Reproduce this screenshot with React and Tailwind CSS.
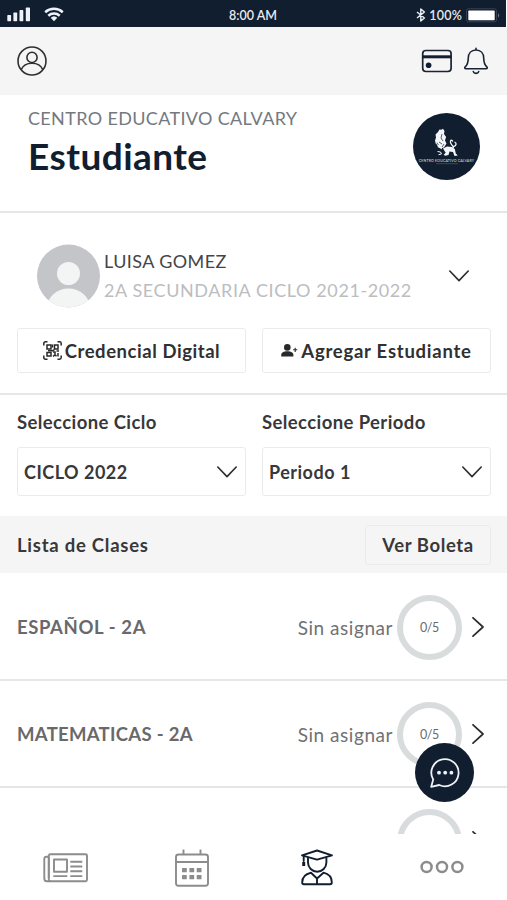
import { clsx } from "clsx"

const classes = [
  { id: 1, name: "ESPAÑOL - 2A", status: "Sin asignar", progress: "0/5", tracking: "tracking-[0.6px]" },
  { id: 2, name: "MATEMATICAS - 2A", status: "Sin asignar", progress: "0/5", tracking: "tracking-[0.3px]" },
  { id: 3 },
]

const ChevronDown = ({ className }) => (
  <svg viewBox="0 0 20 12" fill="none" stroke="#2c2c2e" strokeWidth="1.6" strokeLinecap="round" strokeLinejoin="round" className={clsx("w-5 h-3 shrink-0", className)}>
    <path d="M0.8 1 10 10.6 19.2 1" />
  </svg>
)

const ChevronRight = () => (
  <svg viewBox="0 0 12 20" fill="none" stroke="#2c2c2e" strokeWidth="1.7" strokeLinecap="round" strokeLinejoin="round" className="w-3 h-5 shrink-0">
    <path d="M1 0.8 11 10 1 19.2" />
  </svg>
)

const StatusBar = () => (
  <div className="relative flex items-center h-[27px] w-[506px] bg-[#111e30] text-white">
    <svg viewBox="0 0 60 27" fill="#eef3fa" className="w-[60px] h-[27px] ml-[5px]">
      <rect x="2.3" y="15" width="3.8" height="6.2" rx="0.7" />
      <rect x="8.4" y="12.5" width="3.8" height="8.7" rx="0.7" />
      <rect x="14.5" y="10" width="3.8" height="11.2" rx="0.7" />
      <rect x="20.8" y="7.5" width="4.2" height="13.7" rx="0.7" />
      <g fill="none" stroke="#eef3fa" strokeWidth="2.5">
        <path d="M40.2 12.2a13.2 13.2 0 0 1 17.6 0" />
        <path d="M43.3 15.7a8.6 8.6 0 0 1 11.4 0" />
      </g>
      <path d="M49 21.2l-3.3-3.4a4.9 4.9 0 0 1 6.6 0z" />
    </svg>
    <span className="absolute inset-x-0 top-2 text-center text-[12.5px] leading-4 font-semibold text-[#e6ebf2]">8:00 AM</span>
    <div className="ml-auto flex items-center pt-[3px]">
      <svg viewBox="0 0 10 14" fill="none" stroke="#e6ebf2" strokeWidth="1.5" strokeLinejoin="round" className="w-[10px] h-[14px]">
        <path d="M1 4 8.4 10 4.8 13V1l3.6 3L1 10" />
      </svg>
      <span className="ml-[3px] pt-px text-[12.5px] leading-4 font-semibold tracking-[0.2px] text-[#e6ebf2]">100%</span>
      <svg viewBox="0 0 34 15" className="w-[34px] h-[15px] ml-[4px]">
        <rect x="0.5" y="0.8" width="30" height="13" rx="2" fill="none" stroke="#3b4657" strokeWidth="0.9" />
        <rect x="2.3" y="2.5" width="26.4" height="9.8" rx="0.8" fill="#fff" />
        <path d="M32 5.3a2.4 2.4 0 0 1 0 4.2z" fill="#667080" />
      </svg>
      <span className="w-[6px]" />
    </div>
  </div>
)

const TopBar = () => (
  <div className="flex items-center h-[68px] bg-[#f5f5f5] pl-[17px] pr-[18px]">
    <svg viewBox="0 0 30 30" fill="none" stroke="#303033" strokeWidth="1.6" className="w-[30px] h-[30px]">
      <circle cx="15" cy="15" r="14" />
      <circle cx="15" cy="11.4" r="5.1" />
      <path d="M4.2 23.6c1.8-4.2 6-6.4 10.8-6.4s9 2.2 10.8 6.4" />
    </svg>
    <svg viewBox="0 0 32 24" fill="none" stroke="#1a2334" strokeWidth="1.7" className="w-8 h-6 ml-auto">
      <rect x="1.7" y="1.5" width="28.4" height="21" rx="3.2" />
      <path d="M1.7 7.8h28.4" strokeWidth="3" stroke="#111d30" />
      <circle cx="7.6" cy="16.2" r="2.8" fill="#111d30" stroke="none" />
    </svg>
    <svg viewBox="0 0 26 28" fill="none" stroke="#1a2334" strokeWidth="1.6" strokeLinecap="round" strokeLinejoin="round" className="w-[26px] h-[28px] ml-[10px]">
      <path d="M13 1.2v1.7M13 3c-4.8 0-7.6 3.4-7.7 8-.1 5.2-.9 6.9-3.1 8.9-.9.9-.4 1.8.7 1.8h20.2c1.1 0 1.6-.9.7-1.8-2.2-2-3-3.7-3.1-8.9C20.6 6.4 17.8 3 13 3z" />
      <path d="M10.3 24.6c.6 2.3 4.8 2.3 5.4 0" />
    </svg>
  </div>
)

const SchoolLogo = () => (
  <div className="relative w-[67px] h-[67px] rounded-full bg-[#111e30] overflow-hidden">
    <svg viewBox="0 0 67 67" fill="#f3f6f9" className="w-full h-full">
      <path d="M25 19l1.5-2.5 2 .3 1.5-1 1.5 2.2-.5 3 2 3-1 3.500 1.500 3-2.500 4-3.500 1-3-1.500 1-2.500-1.800-2.500-.7 2.500-1-4 1-3-.5-3z" />
      <path d="M30 35.500l4-2 5 .5 2.800 2 1 4.500 2 2-3.300.5-1.500-4-3.500-.5-1 3.500-3.300.8-1.500-1 2-2z" />
      <path d="M40.500 35c-.5-3-4-4-3-7 .6-1.300 2.400-.8 2 .6M40.500 33.500c3-.5 3.500-3.500 1-4.500" fill="none" stroke="#f3f6f9" strokeWidth="1.300" />
      <path d="M24.500 38.500l3 .5 1 2-3 .7M23 29l2 4 4 3M28 25l5-1" fill="none" stroke="#f3f6f9" strokeWidth="1" />
      <path d="M29 21l-1 4 2 3M31 31l-2 3M26 29l3 2" fill="none" stroke="#111e30" strokeWidth="0.700" />
      <path d="M23 50.700h22" stroke="#56657a" strokeWidth="0.600" />
    </svg>
    <span className="absolute inset-x-0 top-[45px] text-center whitespace-nowrap text-[3.6px] leading-[5px] tracking-[0.12px] font-semibold text-[#c0cad5]">CENTRO EDUCATIVO CALVARY</span>
  </div>
)

const SchoolHeader = () => (
  <div className="flex justify-between h-[118px] border-b-2 border-[#e6e6e6] pl-7 pr-[27px]">
    <div className="pt-[10px]">
      <p className="text-[18px] leading-[26px] tracking-[0.35px] text-[#74797f]">CENTRO EDUCATIVO CALVARY</p>
      <h1 className="mt-[3px] text-[37px] leading-[44px] tracking-[0.45px] font-bold text-[#111e30]">Estudiante</h1>
    </div>
    <div className="pt-[18px]">
      <SchoolLogo />
    </div>
  </div>
)

const QrIcon = () => (
  <svg viewBox="0 0 19 19" fill="none" stroke="#29292b" strokeWidth="1.5" className="w-[19px] h-[19px] shrink-0">
    <path d="M.8 4.500V2.500Q.8.800 2.500.800h2M14.500.800h2q1.700 0 1.700 1.700v2M18.200 14.500v2q0 1.700-1.700 1.700h-2M4.500 18.200h-2Q.8 18.200.8 16.500v-2" />
    <path d="M4 4h4v4H4zM11.500 4h3.500v4h-3.500zM4 11.500h4V15H4z" />
    <path d="M9.500 3.500v3M5 9.700h4.500l2-1M10 11h2v2M13.500 10h2.500M10 15.300l2-1.500 1.500 1.500M15 12v3.500" />
  </svg>
)

const AddUserIcon = () => (
  <svg viewBox="0 0 17 13" fill="#29292b" className="w-[17px] h-[13px] shrink-0">
    <circle cx="6.3" cy="3.4" r="3.3" />
    <path d="M.2 12.5V11c0-2.6 2.6-3.8 6.1-3.8s6.1 1.2 6.1 3.8v1.5z" />
    <path d="M14.2 3.7v4.200M12.100 5.800h4.200" stroke="#29292b" strokeWidth="1.1" />
  </svg>
)

const StudentCard = () => (
  <div className="h-[182px] border-b-2 border-[#e6e6e6] pl-[17px] pr-4 pt-[31px]">
    <div className="flex pl-5">
      <svg viewBox="0 0 63 64" className="w-[63px] h-[64px]">
        <defs>
          <clipPath id="avatar">
            <circle cx="31.5" cy="32" r="31.5" />
          </clipPath>
        </defs>
        <g clipPath="url(#avatar)">
          <rect width="63" height="64" fill="#c3c5c8" />
          <circle cx="31.5" cy="29.5" r="11.5" fill="#f3f4f4" />
          <ellipse cx="31.5" cy="64" rx="21.5" ry="19.5" fill="#f3f4f4" />
        </g>
      </svg>
      <div className="pl-1 pt-[3px] whitespace-nowrap">
        <p className="text-[18px] leading-[29px] tracking-[0.4px] text-[#454547]">LUISA GOMEZ</p>
        <p className="text-[18px] leading-[29px] tracking-[0.6px] text-[#bcbdbf]">2A SECUNDARIA CICLO 2021-2022</p>
      </div>
      <ChevronDown className="ml-auto mr-[22px] mt-[26px]" />
    </div>
    <div className="grid grid-cols-2 gap-4 mt-[20px] text-[18.5px] font-bold text-[#303032]">
      <button className="flex items-center justify-center h-[45px] border border-[#ebebeb] rounded-[3px] whitespace-nowrap">
        <QrIcon />
        <span className="ml-[3px] pt-[2px] tracking-[0.55px]">Credencial Digital</span>
      </button>
      <button className="flex items-center justify-center h-[45px] border border-[#ebebeb] rounded-[3px] whitespace-nowrap">
        <AddUserIcon />
        <span className="ml-[3px] pt-[2px] tracking-[0.75px]">Agregar Estudiante</span>
      </button>
    </div>
  </div>
)

const SelectField = ({ label, value }) => (
  <div>
    <p className="text-[18.5px] leading-[24px] tracking-[0.4px] font-bold">{label}</p>
    <div className="flex items-center justify-between h-[49px] mt-[13px] pl-[6px] pr-[8px] border border-[#ebebeb] rounded-[3px]">
      <span className="pt-px text-[18px] font-bold tracking-[0.5px]">{value}</span>
      <ChevronDown />
    </div>
  </div>
)

const ProgressRing = ({ label }) => (
  <div className="flex items-center justify-center w-[65px] h-[65px] shrink-0 rounded-full border-[6px] border-[#d9dcdc] pt-[2px] text-[12.5px] tracking-[-0.4px] text-[#6b6b6d]">
    {label}
  </div>
)

const ClassRow = ({ item }) => (
  <div className="flex items-center h-[107px] shrink-0 border-b-2 border-[#e6e6e6] pl-[17px] pr-[23px] pt-[2px]">
    <span className={clsx("text-[18.5px] font-bold text-[#69696b]", item.tracking)}>{item.name}</span>
    <span className="ml-auto mr-[4px] pt-px text-[19px] tracking-[0.55px] text-[#717173]">{item.status}</span>
    <ProgressRing label={item.progress} />
    <span className="ml-[10px] pb-px">
      <ChevronRight />
    </span>
  </div>
)

const BottomNav = () => (
  <nav className="relative flex h-[66px] bg-white">
    <svg viewBox="0 0 46 30" fill="none" stroke="#8c8c8c" strokeWidth="1.9" strokeLinejoin="round" className="w-[46px] h-[30px] ml-[43px] mt-[19px]">
      <rect x="5.8" y="1.3" width="38.2" height="26.9" rx="1.5" />
      <path d="M5.8 3.700H3.500Q1.300 3.700 1.300 6v19.200q0 3 2.400 3h4M5.800 4v21" />
      <rect x="11" y="6.5" width="13" height="12.3" />
      <path d="M27.300 8.700h12M27.300 13.500h12M27.300 18.300h12M27.300 23.100h12M10.300 23.100h14" />
    </svg>
    <svg viewBox="0 0 36 40" fill="none" stroke="#8c8c8c" strokeWidth="1.9" className="w-[36px] h-[40px] ml-[85px] mt-[14px]">
      <rect x="2" y="6.5" width="32" height="31.3" rx="2.5" />
      <path d="M2 14h32M9.500 1.500v5M26.500 1.500v5" />
      <g fill="#8c8c8c" stroke="none">
        <rect x="8" y="20" width="4.8" height="4.3" rx="0.5" />
        <rect x="15.4" y="20" width="4.8" height="4.3" rx="0.5" />
        <rect x="22.7" y="20" width="4.8" height="4.3" rx="0.5" />
        <rect x="8" y="27" width="4.8" height="4.3" rx="0.5" />
        <rect x="15.4" y="27" width="4.8" height="4.3" rx="0.5" />
        <rect x="22.7" y="27" width="4.8" height="4.3" rx="0.5" />
      </g>
    </svg>
    <svg viewBox="0 0 34 38" fill="none" stroke="#111e30" strokeWidth="1.9" strokeLinecap="round" strokeLinejoin="round" className="w-[34px] h-[38px] ml-[90px] mt-[15px]">
      <path d="M17 1.500 32 6.300 17 10.700 2 6.300z" />
      <path d="M8 9.300v4.200a9.200 9.200 0 0 0 18.400 0V9.300M3.700 7v5" />
      <path d="M3.700 13v4" strokeWidth="3" strokeLinecap="butt" />
      <path d="M17 29.500l-6-5.800C5 25 2.200 28.300 2.200 33.500q0 1.700 1.700 1.700H30q1.800 0 1.800-1.700c0-5.200-2.800-8.500-8.300-9.800L17 29.500v5.700" />
    </svg>
    <svg viewBox="0 0 44 14" fill="none" stroke="#8c8c8c" strokeWidth="2.5" className="w-[44px] h-[14px] ml-[86px] mt-[26px]">
      <circle cx="6.6" cy="7" r="5" />
      <circle cx="22" cy="7" r="5" />
      <circle cx="37.4" cy="7" r="5" />
    </svg>
  </nav>
)

const ChatButton = () => (
  <button className="absolute left-[415px] top-[743px] flex items-center justify-center w-[59px] h-[59px] rounded-full bg-[#111e30]">
    <svg viewBox="0 0 32 32" fill="none" stroke="#eef2f7" strokeWidth="1.8" strokeLinejoin="round" className="w-8 h-8">
      <path d="M2.200 29.800l2-7.300A13.600 13.600 0 1 1 10.200 28z" />
      <g fill="#eef2f7" stroke="none">
        <circle cx="10" cy="15.7" r="1.9" />
        <circle cx="16.2" cy="15.7" r="1.9" />
        <circle cx="22.4" cy="15.7" r="1.9" />
      </g>
    </svg>
  </button>
)

const App = () => {
  return (
    <div className="relative w-[507px] h-[900px] overflow-hidden bg-white font-['Lato',sans-serif] text-[#38383a]">
      <StatusBar />
      <TopBar />
      <SchoolHeader />
      <StudentCard />

      <div className="grid grid-cols-2 gap-4 h-[121px] pl-[17px] pr-4 pt-[15px]">
        <SelectField label="Seleccione Ciclo" value="CICLO 2022" />
        <SelectField label="Seleccione Periodo" value="Periodo 1" />
      </div>

      <div className="flex items-center justify-between h-[57px] bg-[#f5f5f5] pl-[17px] pr-4 pt-px">
        <h2 className="pt-[2px] text-[18.5px] tracking-[0.75px] font-bold">Lista de Clases</h2>
        <button className="w-[126px] h-[40px] border border-[#ebebeb] rounded-[3px] pt-[2px] text-[18.5px] tracking-[0.6px] font-bold">Ver Boleta</button>
      </div>

      <div className="flex flex-col h-[261px] pt-px overflow-hidden">
        {classes.map((item) => (
          <ClassRow key={item.id} item={item} />
        ))}
      </div>

      <BottomNav />
      <ChatButton />
    </div>
  )
}

export default App
